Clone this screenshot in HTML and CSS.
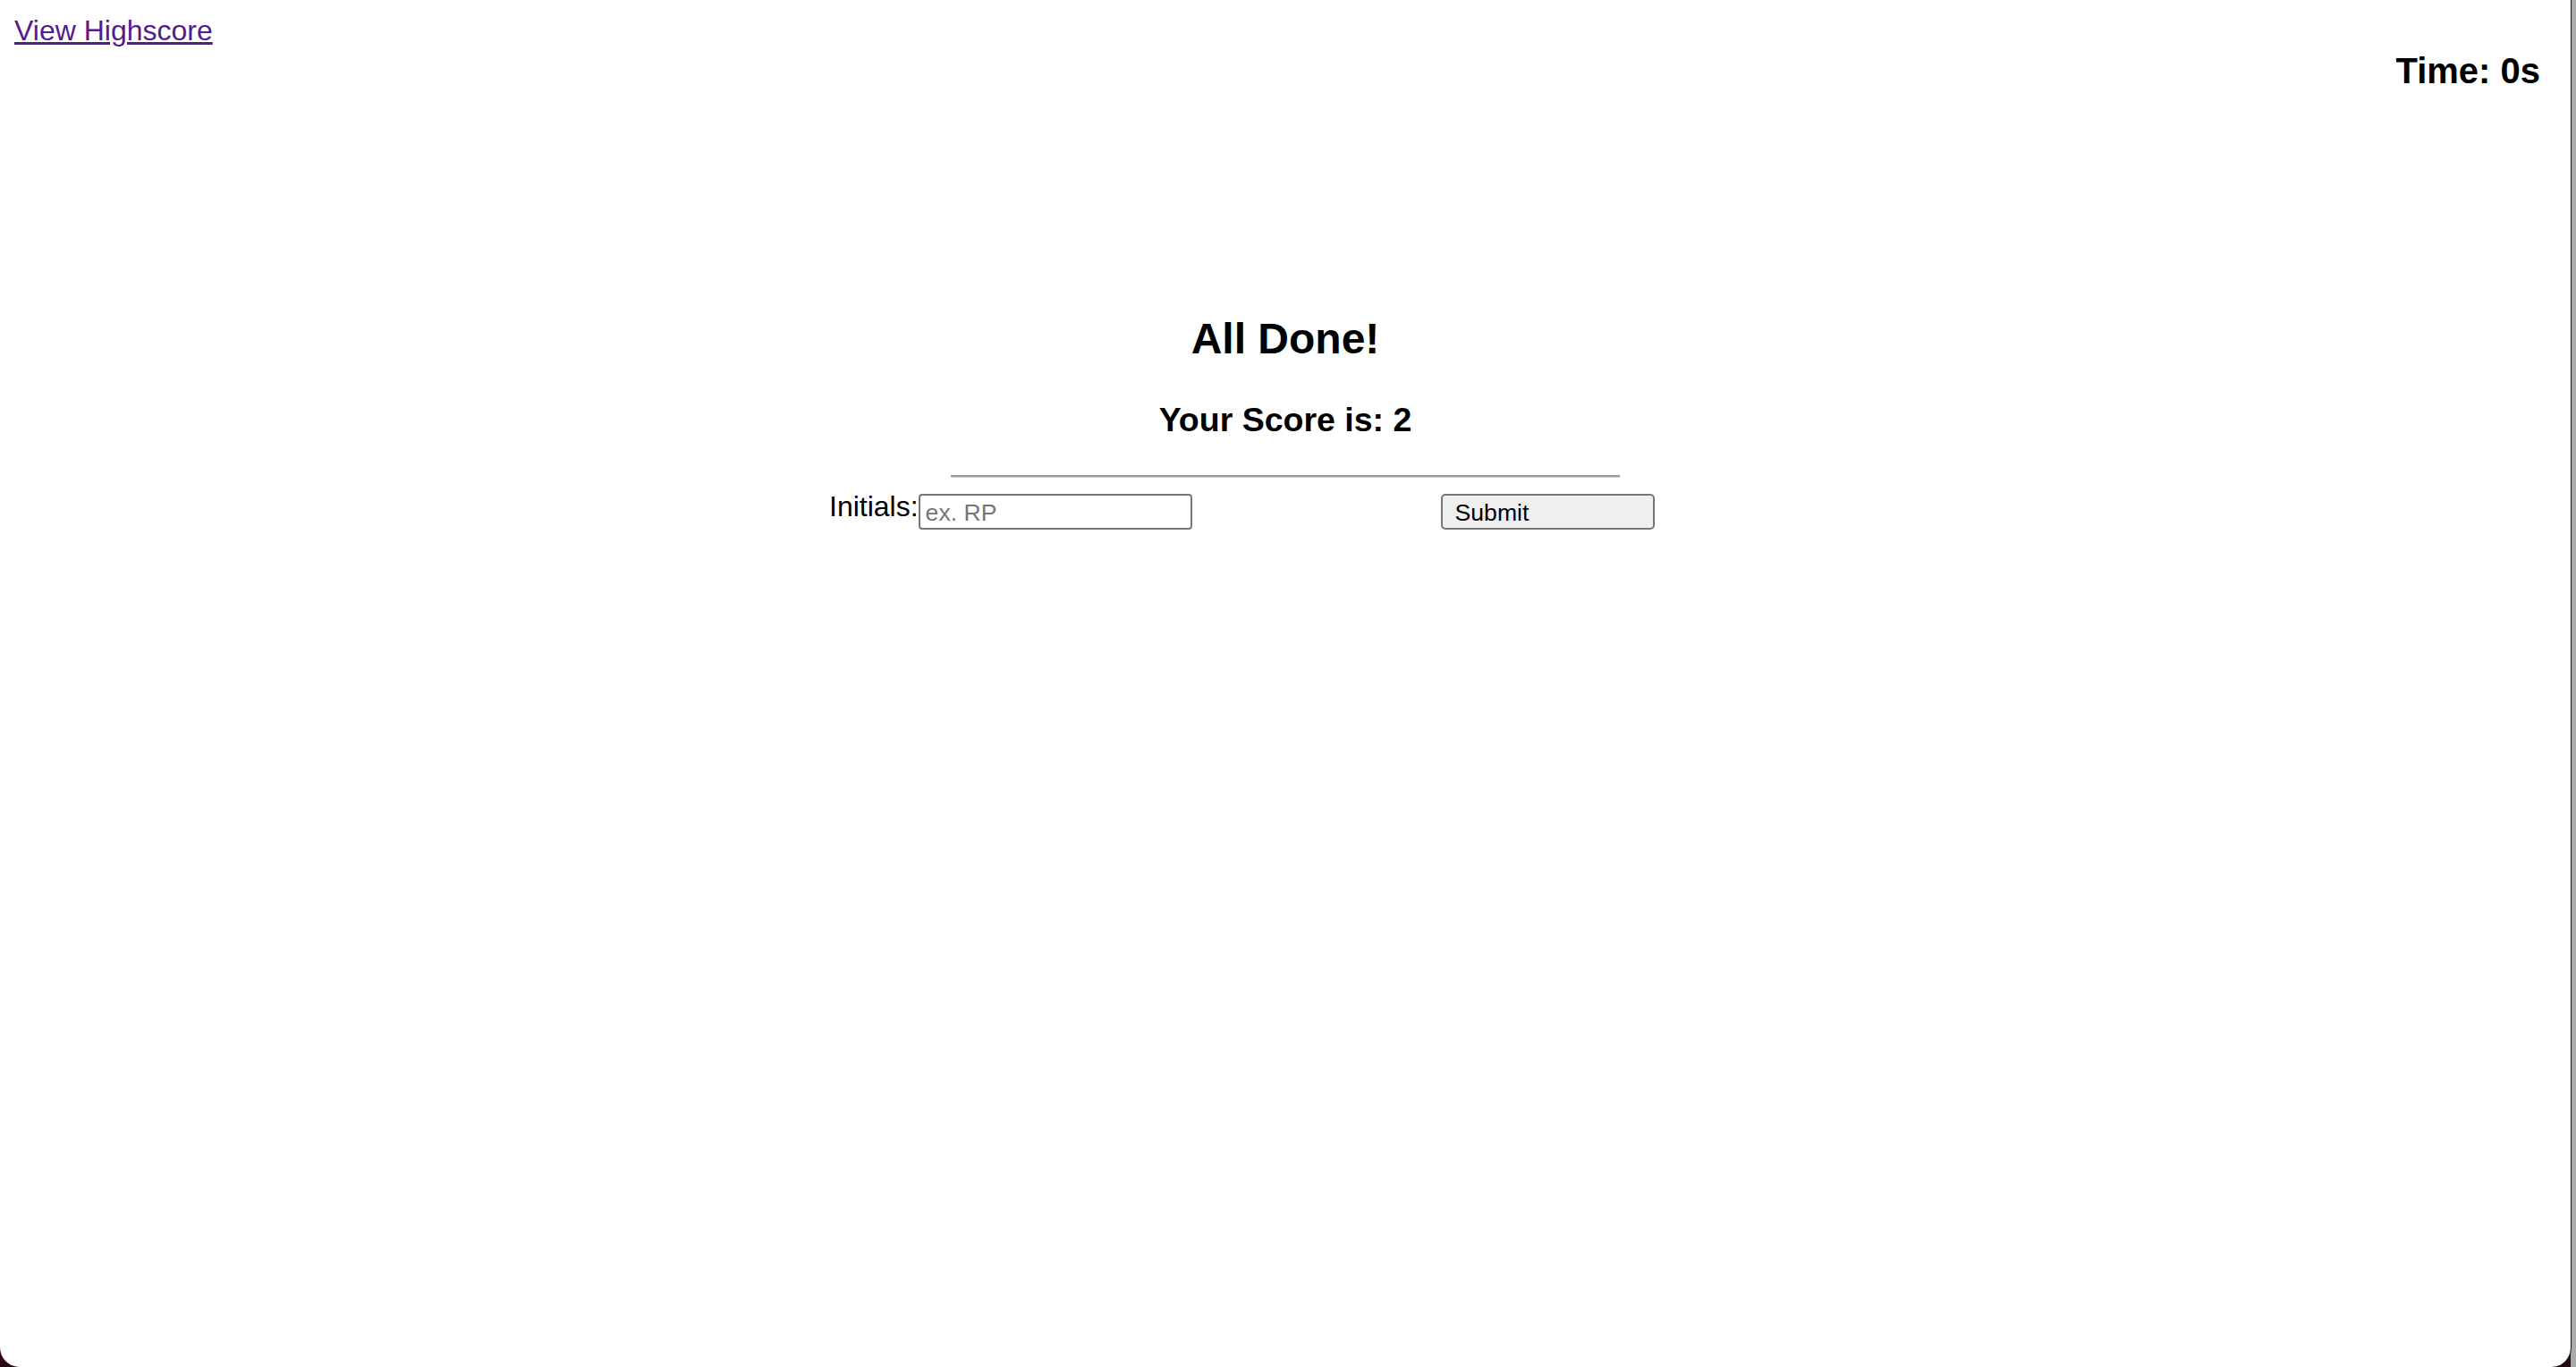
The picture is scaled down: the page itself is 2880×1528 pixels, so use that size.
FILE: index.html
```html
<!DOCTYPE html>
<html lang="en">
<head>
<meta charset="utf-8">
<title>Code Quiz</title>
<link rel="stylesheet" href="styles.css">
</head>
<body>
<div class="window">
  <header class="top-bar">
    <a class="highscore-link" href="#highscores">View Highscore</a>
    <div class="timer">Time: 0s</div>
  </header>
  <main class="end-screen">
    <h2 class="title">All Done!</h2>
    <h3 class="score">Your Score is: 2</h3>
    <hr class="divider">
    <form class="initials-form" onsubmit="return false;">
      <label class="initials-label" for="initials">Initials:</label>
      <input class="initials-input" id="initials" type="text" placeholder="ex. RP">
      <button class="submit-btn" type="submit">Submit</button>
    </form>
  </main>
</div>
</body>
</html>
```

FILE: styles.css
```css
html {
  margin: 0;
  padding: 0;
  background: linear-gradient(to right, #2a0714 0, #2a0714 2874px, #a9a9a9 2874px, #a9a9a9 100%);
}

body {
  margin: 0;
  padding: 0;
  font-family: "Liberation Sans", Arial, Helvetica, sans-serif;
  color: #000;
}

.window {
  box-sizing: border-box;
  width: 2875px;
  min-height: 1528px;
  background: #fff;
  border-right: 1px solid #1a1a1a;
  border-bottom-left-radius: 22px;
  border-bottom-right-radius: 22px;
  padding: 16px 34px 0 16px;
}

.top-bar {
  display: flex;
  justify-content: space-between;
  align-items: flex-start;
}

.highscore-link {
  font-size: 32px;
  line-height: 36px;
  color: #551a8b;
  text-decoration: underline;
  text-underline-offset: 2px;
}

.timer {
  font-size: 40px;
  font-weight: bold;
  line-height: 45px;
  margin-top: 41px;
}

.end-screen {
  display: flex;
  flex-direction: column;
  align-items: center;
  margin-top: 250px;
  margin-right: -18px;
}

.title {
  font-size: 48px;
  font-weight: bold;
  line-height: 54px;
  margin: 0 0 42px;
}

.score {
  font-size: 37.5px;
  font-weight: bold;
  line-height: 42px;
  margin: 0 0 41px;
}

.divider {
  box-sizing: border-box;
  width: 748px;
  height: 3px;
  margin: 0 0 18px;
  border: 0;
  border-top: 2px solid #9a9a9a;
  border-bottom: 1px solid #cfcfcf;
}

.initials-form {
  display: flex;
  align-items: flex-start;
  width: 923px;
  margin-right: 97px;
}

.initials-label {
  font-size: 32px;
  line-height: 36px;
  margin-top: -4px;
}

.initials-input {
  box-sizing: border-box;
  width: 306px;
  height: 40px;
  margin: 0;
  padding: 2px 6px 0;
  border: 2px solid #767676;
  border-radius: 4px;
  font-family: "Liberation Sans", Arial, sans-serif;
  font-size: 26.6px;
  color: #000;
  background: #fff;
}

.initials-input::placeholder {
  color: #757575;
}

.submit-btn {
  box-sizing: border-box;
  width: 239px;
  height: 40px;
  margin: 0 0 0 278px;
  padding: 2px 14px 0;
  border: 2px solid #767676;
  border-radius: 5px;
  background: #efefef;
  font-family: "Liberation Sans", Arial, sans-serif;
  font-size: 26.6px;
  color: #000;
  text-align: left;
}
```
